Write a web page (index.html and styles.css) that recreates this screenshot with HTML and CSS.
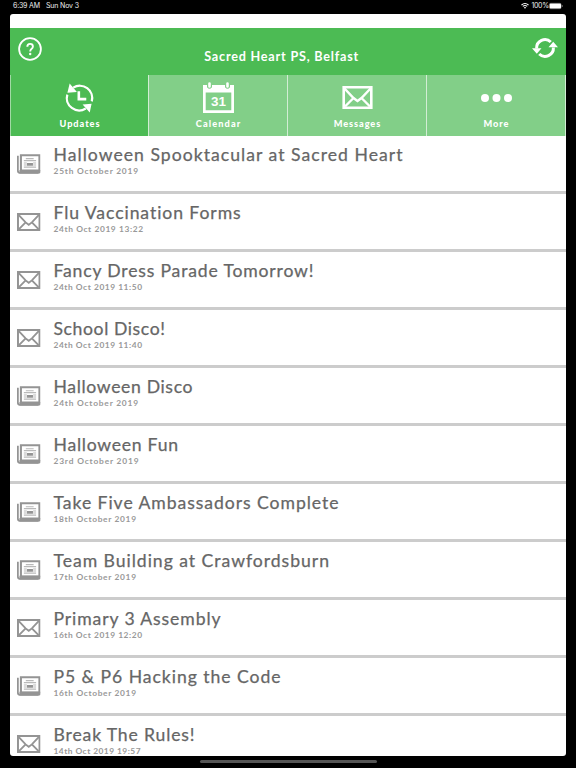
FILE: index.html
```html
<!DOCTYPE html>
<html lang="en">
<head>
<meta charset="utf-8">
<title>Sacred Heart PS, Belfast</title>
<link rel="stylesheet" href="styles.css">
</head>
<body>
<svg class="defs" aria-hidden="true">
  <symbol id="mail" viewBox="0 0 30 23"><g fill="none" stroke="currentColor" stroke-width="2.4"><path d="M1.2 1.2H28.8V21.8H1.2Z" stroke-width="2.6"/><path d="M2 2.5L11 12L15 15L19 12L28 2.5M11 12L2.5 20.5M19 12L27.5 20.5"/></g></symbol>
  <symbol id="news" viewBox="0 0 24 20"><path d="M.9 1.7V17Q.9 19 3 19H22" fill="none" stroke="currentColor" stroke-width="1.8"/><path d="M4 1H22.9V16.7H4Z" fill="none" stroke="currentColor" stroke-width="2.1"/><path d="M2.5 16H24V18.5Q24 19.8 22.5 19.8H2.5Z" fill="currentColor"/><path d="M9 4.6H17M7 6.6H19.5M7 9H10M7 11H10M7 13.2H19.5M16.5 9H19.5M16.5 11H19.5" stroke="currentColor" stroke-width="1.2" opacity=".65"/><path d="M10.2 8.9H16.3V11.9H10.2Z" fill="currentColor"/></symbol>
</svg>
<div class="status"><span data-width="27">6:39 AM</span><span class="day" data-width="33">Sun Nov 3</span>
  <svg class="wifi" viewBox="0 0 8 6"><path d="M.5 2Q4-.9 7.5 2M1.8 3.4Q4 1.6 6.2 3.4" fill="none" stroke="#fff" stroke-width="1.1"/><path d="M2.8 4.4Q4 3.5 5.2 4.4L4 5.8Z" fill="#fff"/></svg>
  <span class="pct" data-width="17.5">100%</span>
  <svg class="battery" viewBox="0 0 14 6"><rect x=".25" y=".25" width="12" height="5.5" rx="1.5" fill="none" stroke="#888" stroke-width=".5"/><rect x=".6" y=".6" width="11.4" height="4.8" rx="1" fill="#fff"/><path d="M13.2 2V4" stroke="#888" stroke-width=".8"/></svg>
</div>
<main class="app">
  <header class="header">
    <svg class="help" viewBox="0 0 24 24"><circle cx="12" cy="12" r="10.9" fill="none" stroke="#fff" stroke-width="1.8"/><path d="M9.3 9.8Q9.3 6.9 12.1 6.9Q14.9 6.9 14.9 9.4Q14.9 10.8 13.4 12Q12.2 13 12.2 14.5" fill="none" stroke="#fff" stroke-width="1.9"/><circle cx="12.2" cy="17" r="1.2" fill="#fff"/></svg>
    <h1><span data-width="154">Sacred Heart PS, Belfast</span></h1>
    <svg class="refresh" viewBox="0 0 26 22"><g fill="none" stroke="#fff" stroke-width="3"><path d="M4.6 11.5A8.4 8.4 0 0 1 18.8 5"/><path d="M21.4 10.5A8.4 8.4 0 0 1 7.2 17"/></g><path d="M0 11.3H9.5L4.8 16.8ZM16.5 10.3H26L21.2 4.8Z" fill="#fff"/></svg>
  </header>
  <nav class="tabs">
    <div class="tab active"><svg class="clock" viewBox="0 0 30 30"><g fill="none" stroke="#fff" stroke-width="2.3"><path d="M8.5 4.3A12.8 12.8 0 0 1 27.7 18.5"/><path d="M21.5 25.8A12.8 12.8 0 0 1 2.4 11.5"/><path d="M14.3 8V16.2H22" stroke-width="2.7"/></g><path d="M4.8 0L12.3 8.7L2.5 9.5ZM18.2 21.8L27.5 20.9L25.6 30Z" fill="#fff"/></svg><span class="label" data-width="40">Updates</span></div>
    <div class="tab"><svg class="cal" viewBox="0 0 31 31"><path d="M0 3H4V5.2Q6.5 8.5 9 5.2V3H22V5.2Q24.5 8.5 27 5.2V3H31V31H0ZM2.7 10.5V28.3H28.3V10.5Z" fill="#fff" fill-rule="evenodd"/><path d="M6.5 1.6V4.5M24.5 1.6V4.5" stroke="#fff" stroke-width="2.6" stroke-linecap="round"/><text x="15.5" y="24.2" text-anchor="middle">31</text></svg><span class="label" data-width="44.5">Calendar</span></div>
    <div class="tab"><svg class="mail"><use href="#mail"/></svg><span class="label" data-width="46.5">Messages</span></div>
    <div class="tab"><svg class="dots" viewBox="0 0 31 8"><g fill="#fff"><circle cx="4" cy="4" r="4"/><circle cx="15.5" cy="4" r="4"/><circle cx="27" cy="4" r="4"/></g></svg><span class="label" data-width="25">More</span></div>
  </nav>
  <section class="list">
    <article class="row"><svg class="news"><use href="#news"/></svg><div><h2><span data-width="349">Halloween Spooktacular at Sacred Heart</span></h2><p><span data-width="84.5">25th October 2019</span></p></div></article>
    <article class="row"><svg class="letter"><use href="#mail"/></svg><div><h2><span data-width="187.5">Flu Vaccination Forms</span></h2><p><span data-width="89.5">24th Oct 2019 13:22</span></p></div></article>
    <article class="row"><svg class="letter"><use href="#mail"/></svg><div><h2><span data-width="260">Fancy Dress Parade Tomorrow!</span></h2><p><span data-width="88.5">24th Oct 2019 11:50</span></p></div></article>
    <article class="row"><svg class="letter"><use href="#mail"/></svg><div><h2><span data-width="111.5">School Disco!</span></h2><p><span data-width="88.5">24th Oct 2019 11:40</span></p></div></article>
    <article class="row"><svg class="news"><use href="#news"/></svg><div><h2><span data-width="139">Halloween Disco</span></h2><p><span data-width="84.5">24th October 2019</span></p></div></article>
    <article class="row"><svg class="news"><use href="#news"/></svg><div><h2><span data-width="124.5">Halloween Fun</span></h2><p><span data-width="85">23rd October 2019</span></p></div></article>
    <article class="row"><svg class="news"><use href="#news"/></svg><div><h2><span data-width="285">Take Five Ambassadors Complete</span></h2><p><span data-width="82.5">18th October 2019</span></p></div></article>
    <article class="row"><svg class="news"><use href="#news"/></svg><div><h2><span data-width="275.5">Team Building at Crawfordsburn</span></h2><p><span data-width="82.5">17th October 2019</span></p></div></article>
    <article class="row"><svg class="letter"><use href="#mail"/></svg><div><h2><span data-width="167">Primary 3 Assembly</span></h2><p><span data-width="88.5">16th Oct 2019 12:20</span></p></div></article>
    <article class="row"><svg class="news"><use href="#news"/></svg><div><h2><span data-width="227">P5 &amp; P6 Hacking the Code</span></h2><p><span data-width="82.5">16th October 2019</span></p></div></article>
    <article class="row"><svg class="letter"><use href="#mail"/></svg><div><h2><span data-width="141">Break The Rules!</span></h2><p><span data-width="87">14th Oct 2019 19:57</span></p></div></article>
  </section>
</main>
<div class="home"></div>
<script src="tracking.js"></script>
</body>
</html>
```
FILE: styles.css
```css
* { box-sizing: border-box; margin: 0; padding: 0; }
body { width: 576px; height: 768px; overflow: hidden; background: #000; font-family: Lato, "Liberation Sans", sans-serif; }
svg { display: block; flex: none; overflow: visible; }
.defs { width: 0; height: 0; position: absolute; }
span { white-space: nowrap; }
.status { height: 13.5px; padding: 1px 13px 3px; display: flex; align-items: center; color: #eee; font: 7px/10px Inter, sans-serif; }
.day { margin-left: 6px; }
.wifi { width: 8px; height: 6px; margin-left: auto; }
.pct { margin: 0 2px 0 2.5px; }
.battery { width: 14px; height: 6px; }
.app { width: 556px; height: 742px; margin: .5px 0 0 10px; padding-top: 14px; background: #fff; border-radius: 3px; overflow: hidden; }
.header { height: 47px; background: #4cbb54; display: grid; grid-template-columns: 34px 1fr 34px; justify-items: center; padding: 8.5px 8px 0 8px; color: #fff; }
.help { width: 24px; height: 24px; justify-self: start; }
.refresh { width: 26px; height: 22px; margin-top: .5px; justify-self: end; }
h1 { font-size: 12.6px; line-height: 16px; font-weight: 700; margin: 12.5px 13.5px 0 0; }
.tabs { height: 61px; display: grid; grid-template-columns: repeat(4, 1fr); background: #82cf88; }
.tab { display: grid; grid-template-rows: 41px 15px; justify-items: center; align-items: center; align-content: start; border-right: 1px solid #d2edd4; color: #fff; }
.tab:first-child { border-left: 1px solid #a0d9a4; }
.active { background: #4cbb54; }
.label { font-size: 9.2px; line-height: 12px; font-weight: 900; }
.clock { width: 29px; height: 30px; }
.cal { width: 31px; height: 31px; }
.cal text { font: 700 13.5px "Liberation Sans", sans-serif; fill: #fff; }
.tab .mail { width: 31px; height: 23px; }
.dots { width: 31px; height: 8px; }
.tab svg { margin-top: 4px; }
.row { height: 58px; border-bottom: 3px solid #ccc; display: flex; gap: 13px; padding-left: 7px; color: #949494; }
.news { width: 23.5px; height: 20px; margin-top: 17.5px; }
.letter { width: 23.5px; height: 18px; margin-top: 18.5px; }
h2 { font-size: 17.6px; line-height: 22px; font-weight: 400; color: #666; -webkit-text-stroke: .25px #666; padding-top: 7.5px; }
p { font-size: 8.4px; line-height: 10px; font-weight: 700; color: #999; margin-top: .5px; }
.home { width: 177px; height: 3px; margin: 4px auto 0; border-radius: 2px; background: #555; }
```
FILE: tracking.js
```js
// Spreads each line of text across its set measure.
document.querySelectorAll('[data-width]').forEach(function (el) {
  el.style.letterSpacing = '0px';
  var natural = el.getBoundingClientRect().width;
  var n = el.textContent.length;
  var gap = (parseFloat(el.dataset.width) - natural) / (n - 1);
  el.style.letterSpacing = gap + 'px';
  el.style.marginRight = -gap + 'px';
});
```
